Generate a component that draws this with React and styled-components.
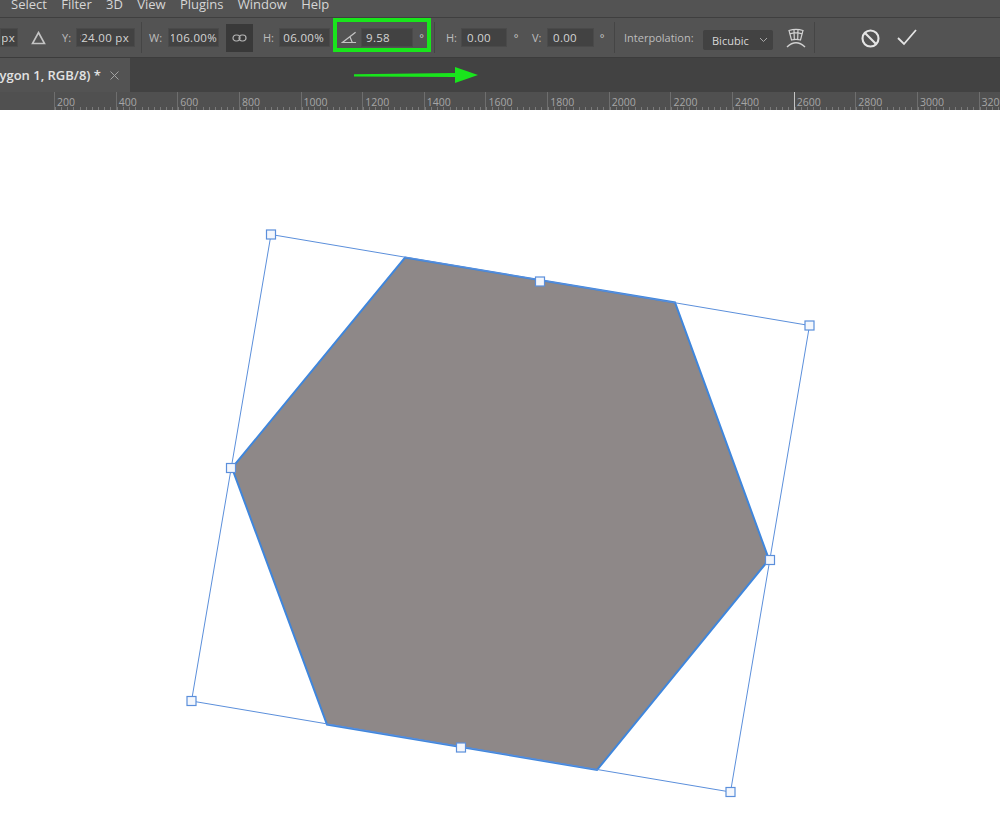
import React from 'react'
import styled, { createGlobalStyle } from 'styled-components'

const GlobalStyle = createGlobalStyle`
  html, body {
    margin: 0;
    background: #fff;
  }
  body {
    font-family: "Open Sans", "Noto Sans", "Liberation Sans", sans-serif;
  }
`

const Page = styled.div`
  width: 1000px;
  height: 827px;
  overflow: hidden;
  display: flex;
  flex-direction: column;
`

const MenuBar = styled.div`
  height: 18px;
  flex: none;
  box-sizing: border-box;
  padding-left: 11px;
  display: flex;
  align-items: flex-end;
  gap: 14.3px;
  overflow: hidden;
  background: #535353;
  border-bottom: 1px solid #3f3f3f;
`

const MenuItem = styled.span`
  font-size: 13px;
  line-height: 16px;
  color: #d6d6d6;
  margin-bottom: 5px;
`

const OptionsBar = styled.div`
  height: 40px;
  flex: none;
  box-sizing: border-box;
  display: flex;
  align-items: center;
  background: #535353;
  border-bottom: 1px solid #3c3c3c;
`

const Field = styled.div`
  width: ${p => p.$w}px;
  height: 19px;
  flex: none;
  box-sizing: border-box;
  padding: 0 ${p => p.$pr ?? 3}px 0 ${p => p.$pl ?? 3}px;
  margin-left: ${p => p.$ml ?? 0}px;
  display: flex;
  align-items: center;
  background: #424242;
  border: 1px solid #4a4a4a;
  color: #d4d4d4;
  font-size: 11.5px;
  letter-spacing: 0.3px;
`

// right aligned value, the start of it gets cut when the field is too narrow
const FieldValue = styled.span`
  flex: 1;
  min-width: 0;
  display: flex;
  justify-content: flex-end;
  overflow: hidden;
  white-space: nowrap;
`

const Label = styled.span`
  flex: none;
  width: ${p => p.$w}px;
  margin-left: ${p => p.$ml ?? 0}px;
  color: #bdbdbd;
  font-size: 11px;
  white-space: nowrap;
`

const Degree = styled.span`
  flex: none;
  width: ${p => p.$w ?? 8}px;
  margin-left: ${p => p.$ml}px;
  color: #c6c6c6;
  font-size: 11px;
  text-align: center;
`

const Divider = styled.div`
  flex: none;
  width: 1px;
  height: 31px;
  margin-left: ${p => p.$ml}px;
  background: #454545;
`

const LinkButton = styled.div`
  width: 27px;
  height: 28px;
  flex: none;
  margin-left: ${p => p.$ml}px;
  display: flex;
  align-items: center;
  justify-content: center;
  background: #393939;
`

const IconSlot = styled.div`
  flex: none;
  display: flex;
  margin: ${p => p.$mt ?? 0}px 0 0 ${p => p.$ml}px;
`

const AngleGroup = styled.div`
  width: 98px;
  height: 34px;
  flex: none;
  box-sizing: border-box;
  margin: 0 0 5px 3px;
  padding: 5px 0 0 4px;
  display: flex;
  align-items: center;
  border: 4px solid #19e51c;
`

const SelectBox = styled.div`
  width: 70px;
  height: 20px;
  flex: none;
  box-sizing: border-box;
  margin: 5px 0 0 9px;
  padding: 0 5px 0 9px;
  display: flex;
  align-items: center;
  justify-content: space-between;
  border-radius: 2px;
  background: #424242;
  color: #d8d8d8;
  font-size: 11px;
`

const TabBar = styled.div`
  height: 34px;
  flex: none;
  position: relative;
  display: flex;
  background: #424242;
`

const Tab = styled.div`
  width: 130px;
  box-sizing: border-box;
  display: flex;
  align-items: center;
  justify-content: flex-end;
  padding-right: 11px;
  gap: 9px;
  background: #535353;
  white-space: nowrap;
  overflow: hidden;
`

const TabTitle = styled.span`
  flex: none;
  color: #e2e2e2;
  font-size: 13px;
  font-weight: 600;
`

const TabClose = styled.svg`
  flex: none;
`

const Arrow = styled.svg`
  position: absolute;
  left: 354px;
  top: 8px;
`

const Ruler = styled.div`
  height: 18px;
  flex: none;
  box-sizing: border-box;
  padding-left: 54px;
  display: flex;
  overflow: hidden;
  background: #505050;
`

const RulerCell = styled.div`
  width: 61.65px;
  flex: none;
  box-sizing: border-box;
  padding: 2px 0 0 2px;
  border-left: 1px solid ${p => (p.$mark ? '#c4c4c4' : '#6e6e6e')};
  color: #a6a6a6;
  font-size: 10.5px;
  line-height: 16px;
  background-image:
    repeating-linear-gradient(90deg, #7a7a7a 0 1px, transparent 1px 6.165px);
  background-size: 100% 3px;
  background-repeat: no-repeat;
  background-position: 0 100%;
`

const Canvas = styled.div`
  flex: 1;
  background: #fff;
`

const labels = [200, 400, 600, 800, 1000, 1200, 1400, 1600, 1800, 2000, 2200, 2400, 2600, 2800, 3000, 3200]
const menus = ['Select', 'Filter', '3D', 'View', 'Plugins', 'Window', 'Help']
const handles = [[271, 234.5], [540, 281.5], [809.5, 325.5], [770, 560], [730.5, 792], [461, 747.5], [191.5, 701], [231, 468]]

export default function App() {
  return (
    <Page>
      <GlobalStyle />
      <MenuBar>
        {menus.map(m => <MenuItem key={m}>{m}</MenuItem>)}
      </MenuBar>

      <OptionsBar>
        <Field $w={18} $pl={1} $pr={2}><FieldValue>px</FieldValue></Field>
        <IconSlot $ml={13}>
          <svg width="15" height="14" viewBox="0 0 15 14" fill="none" stroke="#c4c4c4" strokeWidth="1.6">
            <path d="M7.5 1.5 13.5 12.5H1.5Z" />
          </svg>
        </IconSlot>
        <Label $ml={16} $w={14}>Y:</Label>
        <Field $w={59} $pl={3} $pr={5}><FieldValue>324.00 px</FieldValue></Field>
        <Divider $ml={6} />
        <Label $ml={7} $w={19}>W:</Label>
        <Field $w={51} $pl={2} $pr={1}><FieldValue>106.00%</FieldValue></Field>
        <LinkButton $ml={7}>
          <svg width="15" height="8" viewBox="0 0 15 8" fill="none" stroke="#b4b4b4" strokeWidth="1.2">
            <rect x="1" y="1" width="7" height="6" rx="3" />
            <rect x="7" y="1" width="7" height="6" rx="3" />
          </svg>
        </LinkButton>
        <Label $ml={10} $w={16}>H:</Label>
        <Field $w={51} $pl={3} $pr={5}><FieldValue>106.00%</FieldValue></Field>
        <AngleGroup>
          <svg width="17" height="13" viewBox="0 0 17 13" fill="none" stroke="#c4c4c4" strokeWidth="1.3">
            <path d="M15.5 1 1.5 11.8H16M9.5 5.8 12 11.8" />
          </svg>
          <Field $w={52} $ml={4} $pl={4}>9.58</Field>
          <Degree $ml={3} $w={11}>°</Degree>
        </AngleGroup>
        <Divider $ml={3} />
        <Label $ml={11} $w={15}>H:</Label>
        <Field $w={46} $pl={5}>0.00</Field>
        <Degree $ml={5}>°</Degree>
        <Label $ml={12} $w={15}>V:</Label>
        <Field $w={47} $pl={5}>0.00</Field>
        <Degree $ml={4}>°</Degree>
        <Divider $ml={8} />
        <Label $ml={9} $w={70}>Interpolation:</Label>
        <SelectBox>
          Bicubic
          <svg width="9" height="6" viewBox="0 0 9 6" fill="none" stroke="#a8a8a8" strokeWidth="1">
            <path d="M1 1l3.5 3.5L8 1" />
          </svg>
        </SelectBox>
        <IconSlot $ml={13} $mt={2}>
          <svg width="20" height="21" viewBox="0 0 20 21" fill="none" stroke="#d2d2d2" strokeWidth="1.2">
            <path d="M3 2.5Q10 .2 17 2.5L14.5 12Q10 10.8 5.5 12Z" />
            <path d="M3.8 5.8Q10 4 16.2 5.8M8 1.6 8.3 11.3M12 1.6 11.7 11.3" />
            <path d="M1 19Q10 10.5 19 19" strokeWidth="1.4" />
          </svg>
        </IconSlot>
        <Divider $ml={8} />
        <IconSlot $ml={46} $mt={2}>
          <svg width="19" height="19" viewBox="0 0 19 19" fill="none" stroke="#e4e4e4" strokeWidth="2.1">
            <circle cx="9.5" cy="9.5" r="8" />
            <path d="M4 4l11 11" />
          </svg>
        </IconSlot>
        <IconSlot $ml={17}>
          <svg width="20" height="17" viewBox="0 0 20 17" fill="none" stroke="#e4e4e4" strokeWidth="1.8">
            <path d="M1 9l6 6L19 1" />
          </svg>
        </IconSlot>
      </OptionsBar>

      <TabBar>
        <Tab>
          <TabTitle>lygon 1, RGB/8) *</TabTitle>
          <TabClose width="9" height="9" viewBox="0 0 9 9" stroke="#a2a2a2" strokeWidth="1">
            <path d="M.5.5l8 8M8.5.5l-8 8" />
          </TabClose>
        </Tab>
        <Arrow width="124" height="18" viewBox="0 0 124 18">
          <path d="M0 8.2 101 7V1l23 8-23 8v-6L0 10.6Z" fill="#19e51c" />
        </Arrow>
      </TabBar>

      <Ruler>
        {labels.map(l => <RulerCell key={l} $mark={l === 2600}>{l}</RulerCell>)}
      </Ruler>

      <Canvas>
        <svg width="1000" height="717" viewBox="0 110 1000 717">
          <polygon points="405,257.5 675,302.5 769,559.5 597,770 327,724.5 232,468" fill="#8e8888" stroke="#3f86dc" strokeWidth="2" />
          <polygon points="271,234.5 809.5,325.5 730.5,792 191.5,701" fill="none" stroke="#5b8fdb" strokeWidth="1" />
          {handles.map(([x, y]) => (
            <rect key={x} x={x - 4.5} y={y - 4.5} width="9" height="9" fill="#f4f7fc" stroke="#5b8fdb" strokeWidth="1.2" />
          ))}
        </svg>
      </Canvas>
    </Page>
  )
}
